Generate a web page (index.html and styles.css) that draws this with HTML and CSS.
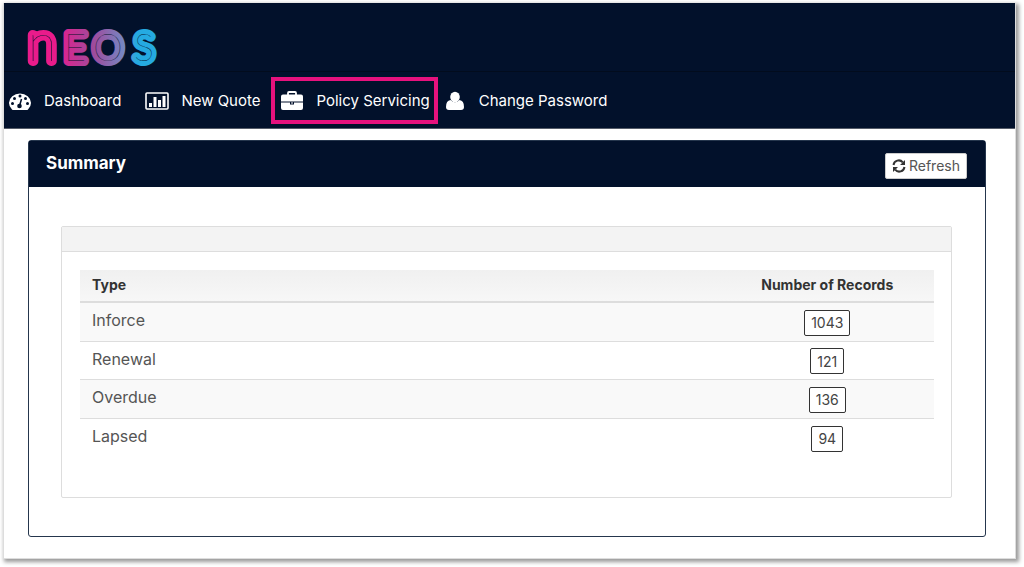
FILE: index.html
```html
<!DOCTYPE html>
<html lang="en">
<head>
<meta charset="utf-8">
<title>NEOS – Policy Servicing</title>
<link rel="stylesheet" href="styles.css">
</head>
<body>
<div class="page">
  <header class="header">
    <div class="brand">
      <svg class="logo" viewBox="0 0 140 70" role="img" aria-label="NEOS">
        <defs>
          <linearGradient id="brand" gradientUnits="userSpaceOnUse" x1="0" y1="0" x2="134" y2="0">
            <stop offset="0.22" stop-color="#e91b8b"/>
            <stop offset="0.5" stop-color="#a04a9c"/>
            <stop offset="0.76" stop-color="#6f8fc8"/>
            <stop offset="0.82" stop-color="#25aae1"/>
          </linearGradient>
        </defs>
        <text class="logo-text" y="58"><tspan class="logo-n" x="2">n</tspan><tspan x="38">E</tspan><tspan x="67">O</tspan><tspan x="108">S</tspan></text>
      </svg>
    </div>
    <nav class="nav">
      <a class="nav-link nav-link-first" href="#dashboard">
        <svg class="icon" viewBox="0 0 24 20" aria-hidden="true"><path fill="#fff" d="M4 18.500A11 9.500 0 1 1 20 18.500Q19.500 19 18.500 19H5.500Q4.500 19 4 18.500Z"/><g fill="#02112b"><circle cx="4.500" cy="12.500" r="1.500"/><circle cx="6.500" cy="7.500" r="1.500"/><circle cx="12" cy="5" r="1.500"/><circle cx="17.500" cy="7.500" r="1.500"/><circle cx="19.500" cy="12.500" r="1.500"/><circle cx="11.500" cy="15" r="2.300"/></g><path d="M11.500 15L13.500 8" stroke="#02112b" stroke-width="1.500"/></svg>
        <span>Dashboard</span>
      </a>
      <a class="nav-link" href="#quote">
        <svg class="icon" viewBox="0 0 24 20" aria-hidden="true"><rect x="1" y="2" width="22" height="16" rx="1" fill="none" stroke="#fff" stroke-width="1.600"/><path fill="#fff" d="M4 12h3v4H4zM8.500 6h3v10h-3zM13 9h3v7h-3zM17.500 5h3v11h-3z"/></svg>
        <span>New Quote</span>
      </a>
      <a class="nav-link nav-link-active" href="#policy">
        <svg class="icon" viewBox="0 0 24 20" aria-hidden="true"><path fill="none" stroke="#fff" stroke-width="1.800" d="M8 5V2Q8 1 9 1H15Q16 1 16 2V5"/><path fill="#fff" d="M3 3.500H21Q23 3.500 23 5.500V10.500H1V5.500Q1 3.500 3 3.500ZM1 11.500H10V13.500H14V11.500H23V17Q23 19 21 19H3Q1 19 1 17Z"/><path fill="#fff" d="M11 11.500h2v1h-2z"/></svg>
        <span>Policy Servicing</span>
      </a>
      <a class="nav-link" href="#password">
        <svg class="icon" viewBox="0 0 24 20" aria-hidden="true"><ellipse cx="12" cy="6" rx="4.800" ry="5.200" fill="#fff"/><path fill="#fff" d="M7.500 9Q12 13.500 16.500 9Q21 9.500 21 16Q21 19 18 19H6Q3 19 3 16Q3 9.500 7.500 9Z"/></svg>
        <span>Change Password</span>
      </a>
    </nav>
  </header>
  <main class="main">
    <section class="card">
      <div class="card-head">
        <h1 class="card-title">Summary</h1>
        <button class="refresh" type="button">
          <svg class="refresh-icon" viewBox="0 0 14 14" aria-hidden="true"><path fill="none" stroke="#333" stroke-width="2" d="M1.500 6A5.300 5.300 0 0 1 10.800 3.300M12.500 8A5.300 5.300 0 0 1 3.200 10.700"/><path fill="#333" d="M13 1V6H8ZM1 13V8H6Z"/></svg>
          <span>Refresh</span>
        </button>
      </div>
      <div class="card-body">
        <div class="panel">
          <div class="panel-head"></div>
          <div class="panel-body">
            <table class="records">
              <thead><tr><th scope="col">Type</th><th class="count" scope="col">Number of Records</th></tr></thead>
              <tbody>
                <tr><td>Inforce</td><td class="count"><button class="number" type="button">1043</button></td></tr>
                <tr><td>Renewal</td><td class="count"><button class="number" type="button">121</button></td></tr>
                <tr><td>Overdue</td><td class="count"><button class="number" type="button">136</button></td></tr>
                <tr><td>Lapsed</td><td class="count"><button class="number" type="button">94</button></td></tr>
              </tbody>
            </table>
          </div>
        </div>
      </div>
    </section>
  </main>
</div>
</body>
</html>
```
FILE: styles.css
```css
* { box-sizing: border-box; }
body {
  margin: 0;
  padding: 3px 8px 8px 3px;
  background: #fff;
  color: #555;
  font-family: Inter, "Open Sans", sans-serif;
  font-size: 16px;
}
.page {
  background: #fff;
  border: 1px solid #ddd;
  border-top: 0;
  box-shadow: 2px 2px 4px 1px #999;
}
.header { background: #02112b; border-bottom: 1px solid #555c69; }
.brand { height: 69px; padding: 0 22px; border-bottom: 1px solid #020c1d; }
.logo { display: block; width: 140px; height: 70px; overflow: visible; }
.logo-text {
  font-family: Lato, sans-serif;
  font-size: 38px;
  font-weight: 100;
  fill: #02112b;
  stroke: url(#brand);
  stroke-width: 10px;
  stroke-linejoin: round;
  paint-order: stroke;
}
.logo-n { font-size: 52px; }
.nav { display: flex; align-items: center; padding: 5px 4px 4px; }
.nav-link {
  display: flex;
  align-items: center;
  gap: 12px;
  height: 47px;
  padding: 0 11px 0 0;
  color: #fff;
  font-size: 15px;
  text-decoration: none;
}
.nav-link-first { padding-right: 24px; }
.nav-link-active { padding: 0 4px 0 5px; margin-right: 5px; border: 4px solid #e6127d; }
.icon { display: block; width: 24px; height: 20px; }
.main { padding: 11px 29px 21px 24px; }
.card { border: 1px solid #25364d; border-radius: 3px; }
.card-head {
  display: flex;
  align-items: center;
  justify-content: space-between;
  height: 46px;
  padding: 0 18px 2px 17px;
  background: #02112b;
}
.card-title { margin: 0; color: #fff; font-size: 17px; font-weight: 700; }
.refresh {
  display: flex;
  align-items: center;
  gap: 3px;
  height: 26px;
  margin-top: 5px;
  padding: 0 6px;
  border: 1px solid #ccc;
  border-radius: 2px;
  background: #fff;
  color: #555;
  font: inherit;
  font-size: 14px;
}
.refresh-icon { width: 14px; height: 14px; }
.card-body { padding: 39px 33px 38px 32px; }
.panel { border: 1px solid #ddd; border-radius: 2px; }
.panel-head { height: 25px; background: #f3f3f3; border-bottom: 1px solid #ddd; }
.panel-body { padding: 18px 17px 40px 18px; }
.records { width: 100%; border-spacing: 0; table-layout: fixed; }
.records th, .records td { padding: 0 12px; text-align: left; }
.records th {
  height: 33px;
  padding-bottom: 3px;
  border-bottom: 2px solid #ddd;
  background: linear-gradient(#f0f0f0, #f7f7f7);
  color: #333;
  font-size: 14px;
  font-weight: 700;
}
.records td { height: 38px; padding-bottom: 4px; border-bottom: 1px solid #ddd; }
.records tbody tr:nth-child(odd) td { height: 39px; background: #f9f9f9; }
.records tbody tr:last-child td { border-bottom: 0; }
.records th.count { width: 25%; padding: 0 0 3px; text-align: center; }
.records td.count { padding: 1px 0 0; text-align: center; }
.number {
  height: 26px;
  margin: 0;
  padding: 0 6px;
  border: 1px solid #333;
  border-radius: 2px;
  background: #fff;
  color: #444;
  font: inherit;
  font-size: 14px;
}
```
